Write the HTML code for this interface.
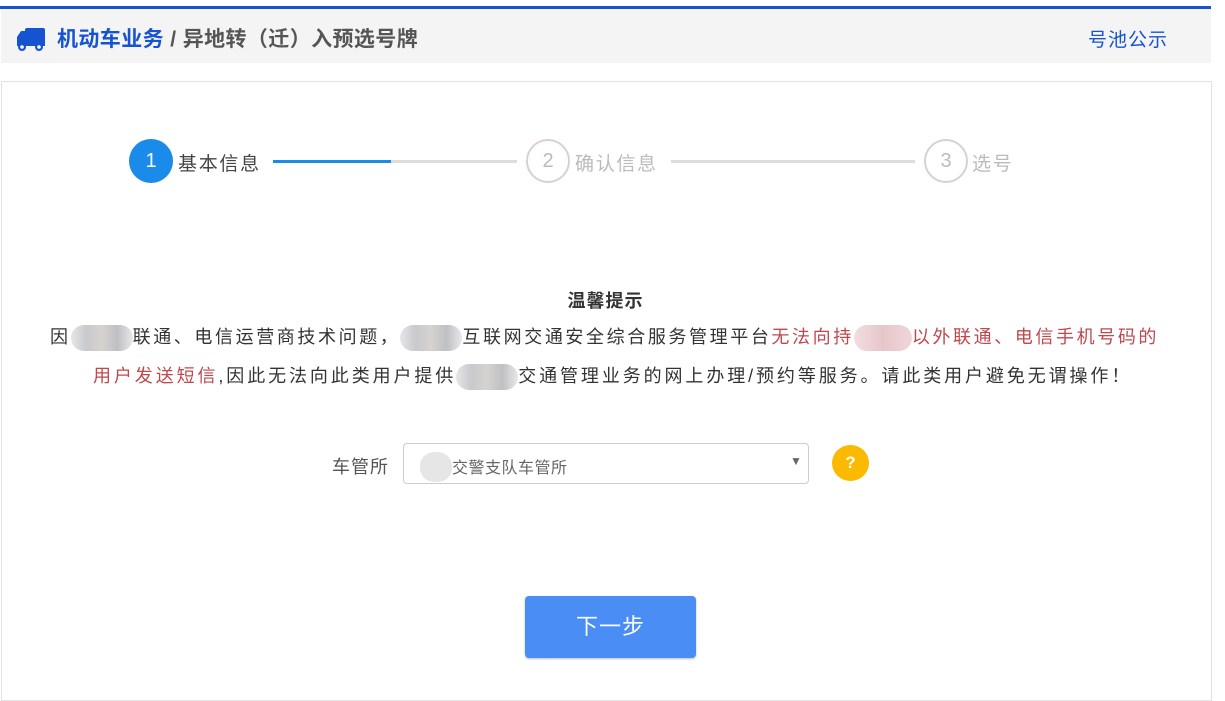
<!DOCTYPE html>
<html><head><meta charset="utf-8"><style>
*{margin:0;padding:0;box-sizing:border-box}
body{width:1225px;height:684px;background:#fff;font-family:"Liberation Sans","Noto Sans CJK SC",sans-serif;position:relative;overflow:hidden;color:#333}
.abs{position:absolute}
.topline{left:0;top:6px;width:1211px;height:3px;background:#1553d1}
.hdr{left:1px;top:9px;width:1210px;height:54px;background:#f4f4f4}
.box{left:1px;top:81px;width:1211px;height:620px;border:1px solid #e2e2e2}
.circ{width:44px;height:44px;border-radius:50%;text-align:center;line-height:40px;font-size:20px}
.blur{display:inline-block;height:26px;vertical-align:middle;border-radius:13px;background:linear-gradient(90deg,#e6e6ea,#c9c9cc,#d6d2cf,#bfc0c4,#e8e8ea)}
.red{color:#c0474d}
.p{left:0;width:1211px;text-align:center;font-size:18px;color:#333}
.st{font-size:19px;letter-spacing:1.7px}
</style></head><body>
<div class="abs topline"></div>
<div class="abs hdr"></div>
<svg class="abs" style="left:16px;top:28px" width="30" height="24" viewBox="0 0 30 24"><rect x="9" y="0" width="20" height="16" rx="2" fill="#1553d1"/><path d="M1 9 L5 3 H10 V16 H1 Z" fill="#1553d1"/><rect x="1" y="14" width="28" height="4" fill="#1553d1"/><circle cx="6" cy="19" r="4" fill="#1553d1"/><circle cx="6" cy="19" r="1.8" fill="#fff"/><circle cx="23" cy="19" r="4" fill="#1553d1"/><circle cx="23" cy="19" r="1.8" fill="#fff"/></svg>
<div class="abs" style="left:57px;top:23px;font-size:21px;font-weight:bold;color:#555;white-space:nowrap;letter-spacing:0.4px"><span style="color:#1553d1">机动车业务</span> / 异地转（迁）入预选号牌</div>
<div class="abs" style="left:1088px;top:25px;font-size:19px;color:#1553d1;letter-spacing:1px">号池公示</div>
<div class="abs box"></div>
<div class="abs circ" style="left:129px;top:139px;background:#1a8be8;color:#fff;line-height:44px">1</div>
<div class="abs st" style="left:178px;top:149px;color:#444">基本信息</div>
<div class="abs" style="left:273px;top:160px;width:244px;height:3px;background:#ddd"></div>
<div class="abs" style="left:273px;top:160px;width:118px;height:3px;background:#1a8be8"></div>
<div class="abs circ" style="left:526px;top:139px;border:2px solid #d8d0d2;color:#bbb">2</div>
<div class="abs st" style="left:575px;top:149px;color:#bbb">确认信息</div>
<div class="abs" style="left:671px;top:160px;width:244px;height:3px;background:#ddd"></div>
<div class="abs circ" style="left:924px;top:139px;border:2px solid #d8d0d2;color:#bbb">3</div>
<div class="abs st" style="left:972px;top:149px;color:#bbb">选号</div>
<div class="abs p" style="top:287px;font-weight:bold;font-size:18px;left:0;letter-spacing:1px">温馨提示</div>
<div class="abs" style="left:50px;top:324px;font-size:18px;white-space:nowrap;line-height:26px;letter-spacing:2.6px">因<span class="blur" style="width:62px"></span>联通、电信运营商技术问题，<span class="blur" style="width:62px"></span>互联网交通安全综合服务管理平台<span class="red">无法向持<span class="blur" style="width:58px;background:linear-gradient(90deg,#f2dde0,#e6c6cb,#efd6da)"></span>以外联通、电信手机号码的</span></div>
<div class="abs" style="left:93px;top:363px;font-size:18px;white-space:nowrap;line-height:26px;letter-spacing:2.9px"><span class="red">用户发送短信</span>,因此无法向此类用户提供<span class="blur" style="width:62px"></span>交通管理业务的网上办理/预约等服务。请此类用户避免无谓操作！</div>
<div class="abs" style="left:332px;top:453px;font-size:18px;color:#555;letter-spacing:1px">车管所</div>
<div class="abs" style="left:403px;top:443px;width:406px;height:41px;border:1px solid #ccc;border-radius:4px"></div>
<div class="abs" style="left:420px;top:452px;width:32px;height:30px;border-radius:14px;background:#e6e6e6"></div>
<div class="abs" style="left:452px;top:454px;font-size:16px;color:#666;letter-spacing:0.5px">交警支队车管所</div>
<div class="abs" style="left:790px;top:454px;font-size:12px;color:#666">▼</div>
<div class="abs" style="left:832px;top:445px;width:37px;height:36px;border-radius:50%;background:#fbb900;color:#fff;text-align:center;line-height:36px;font-size:17px;font-weight:bold">?</div>
<div class="abs" style="left:525px;top:596px;width:171px;height:62px;border-radius:4px;background:#4a8ef5;box-shadow:0 1px 2px #bbb;color:#fff;font-size:22px;text-align:center;line-height:62px;letter-spacing:1px">下一步</div>
</body></html>
